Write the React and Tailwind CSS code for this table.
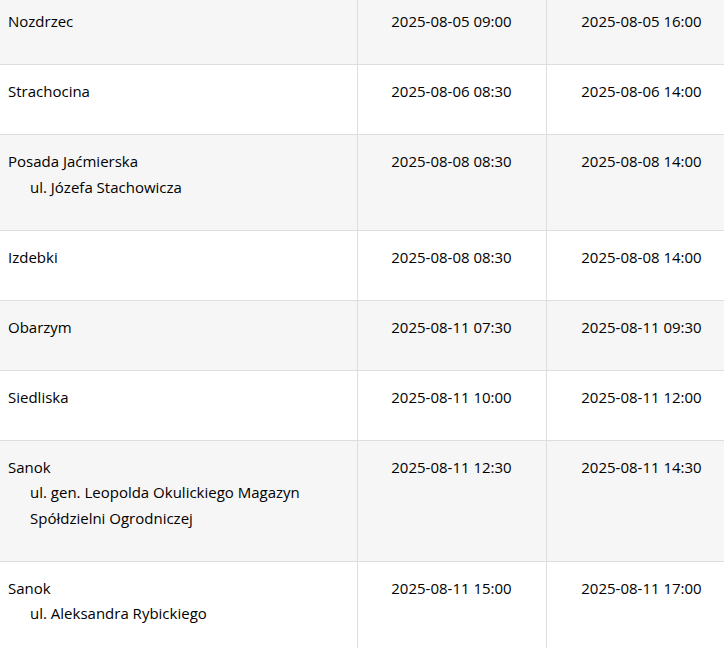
import React from "react";

const rows = [
  { name: "Nozdrzec", sub: [], from: "2025-08-05 09:00", to: "2025-08-05 16:00" },
  { name: "Strachocina", sub: [], from: "2025-08-06 08:30", to: "2025-08-06 14:00" },
  { name: "Posada Jaćmierska", sub: ["ul. Józefa Stachowicza"], from: "2025-08-08 08:30", to: "2025-08-08 14:00" },
  { name: "Izdebki", sub: [], from: "2025-08-08 08:30", to: "2025-08-08 14:00" },
  { name: "Obarzym", sub: [], from: "2025-08-11 07:30", to: "2025-08-11 09:30" },
  { name: "Siedliska", sub: [], from: "2025-08-11 10:00", to: "2025-08-11 12:00" },
  { name: "Sanok", sub: ["ul. gen. Leopolda Okulickiego Magazyn", "Spółdzielni Ogrodniczej"], from: "2025-08-11 12:30", to: "2025-08-11 14:30" },
  { name: "Sanok", sub: ["ul. Aleksandra Rybickiego"], from: "2025-08-11 15:00", to: "2025-08-11 17:00" },
];

export default function App() {
  return (
    <div className="w-[724px] h-[648px] overflow-hidden bg-white">
      <div
        className="w-[738px] -mt-[5px] text-[15px] leading-[25.5px] text-black"
        style={{ fontFamily: '"Open Sans", "Noto Sans", sans-serif' }}
      >
        {rows.map((r, i) => (
          <div
            key={i}
            className={`grid grid-cols-[358px_189px_190px] border-b border-[#dedede] ${i % 2 === 0 ? "bg-[#f6f6f6]" : "bg-white"}`}
          >
            <div className="pl-[8px] pr-2 pt-[14px] pb-[29.5px] border-r border-[#dedede]">
              <div>{r.name}</div>
              {r.sub.map((s, j) => (
                <div key={j} className="pl-[22px]">{s}</div>
              ))}
            </div>
            <div className="pt-[14px] pb-[29.5px] pr-[1px] text-center border-r border-[#dedede]">{r.from}</div>
            <div className="pt-[14px] pb-[29.5px] text-center border-r border-[#dedede]">{r.to}</div>
          </div>
        ))}
      </div>
    </div>
  );
}
